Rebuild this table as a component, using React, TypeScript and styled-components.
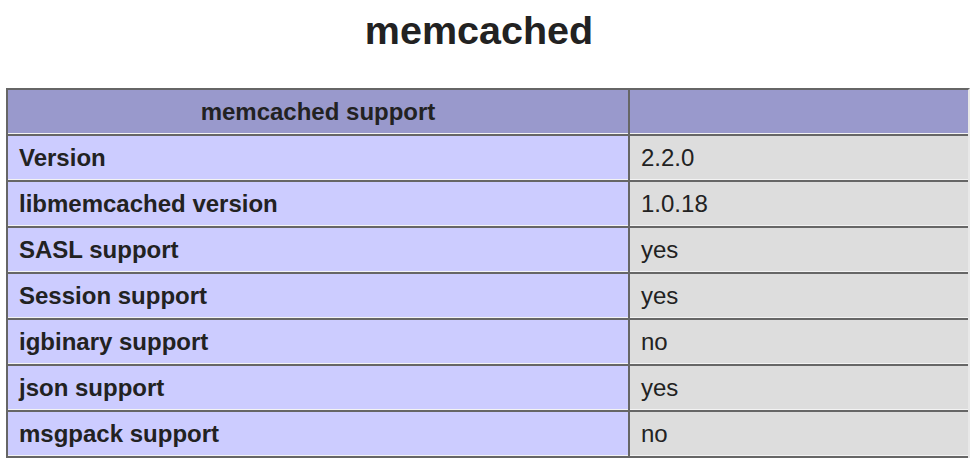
import React from "react";
import styled, { createGlobalStyle } from "styled-components";

const Global = createGlobalStyle`
  html, body {
    margin: 0;
    padding: 0;
    background: #ffffff;
  }
  body {
    font-family: "Liberation Sans", Arial, Helvetica, sans-serif;
    color: #222222;
  }
`;

const Page = styled.div`
  width: 970px;
  height: 458px;
  overflow: hidden;
  display: flex;
  flex-direction: column;
`;

const Title = styled.h1`
  margin: 0;
  padding: 6px 12px 0 0;
  height: 88px;
  box-sizing: border-box;
  font-size: 39.5px;
  line-height: 48px;
  font-weight: bold;
  text-align: center;
  color: #222222;
`;

const TableWrap = styled.div`
  padding-left: 6px;
`;

const Table = styled.table`
  width: 964px;
  border-collapse: separate;
  border-spacing: 0;
  border-top: 2px solid #666666;
  border-left: 2px solid #666666;
  border-right: 2px solid #e8e8e8;
  box-sizing: border-box;
  table-layout: fixed;
`;

const Cell = styled.td<{ $kind: "head" | "label" | "value" }>`
  height: 46px;
  box-sizing: border-box;
  padding: 0 11px;
  vertical-align: middle;
  font-size: 24px;
  color: #222222;
  border-bottom: 2px solid #666666;
  box-shadow: inset 0 -1px 0 #f3f3f3;
  font-weight: ${(p) => (p.$kind === "value" ? "normal" : "bold")};
  text-align: ${(p) => (p.$kind === "head" ? "center" : "left")};
  background: ${(p) =>
    p.$kind === "head" ? "#9999cc" : p.$kind === "label" ? "#ccccff" : "#dddddd"};
`;

const LeftCell = styled(Cell)`
  width: 622px;
  border-right: 2px solid #666666;
`;

const rows: [string, string][] = [
  ["Version", "2.2.0"],
  ["libmemcached version", "1.0.18"],
  ["SASL support", "yes"],
  ["Session support", "yes"],
  ["igbinary support", "no"],
  ["json support", "yes"],
  ["msgpack support", "no"],
];

export default function App() {
  return (
    <Page>
      <Global />
      <Title>memcached</Title>
      <TableWrap>
        <Table>
          <thead>
            <tr>
              <LeftCell as="th" $kind="head">
                memcached support
              </LeftCell>
              <Cell as="th" $kind="head"></Cell>
            </tr>
          </thead>
          <tbody>
            {rows.map(([k, v]) => (
              <tr key={k}>
                <LeftCell $kind="label">{k}</LeftCell>
                <Cell $kind="value">{v}</Cell>
              </tr>
            ))}
          </tbody>
        </Table>
      </TableWrap>
    </Page>
  );
}
